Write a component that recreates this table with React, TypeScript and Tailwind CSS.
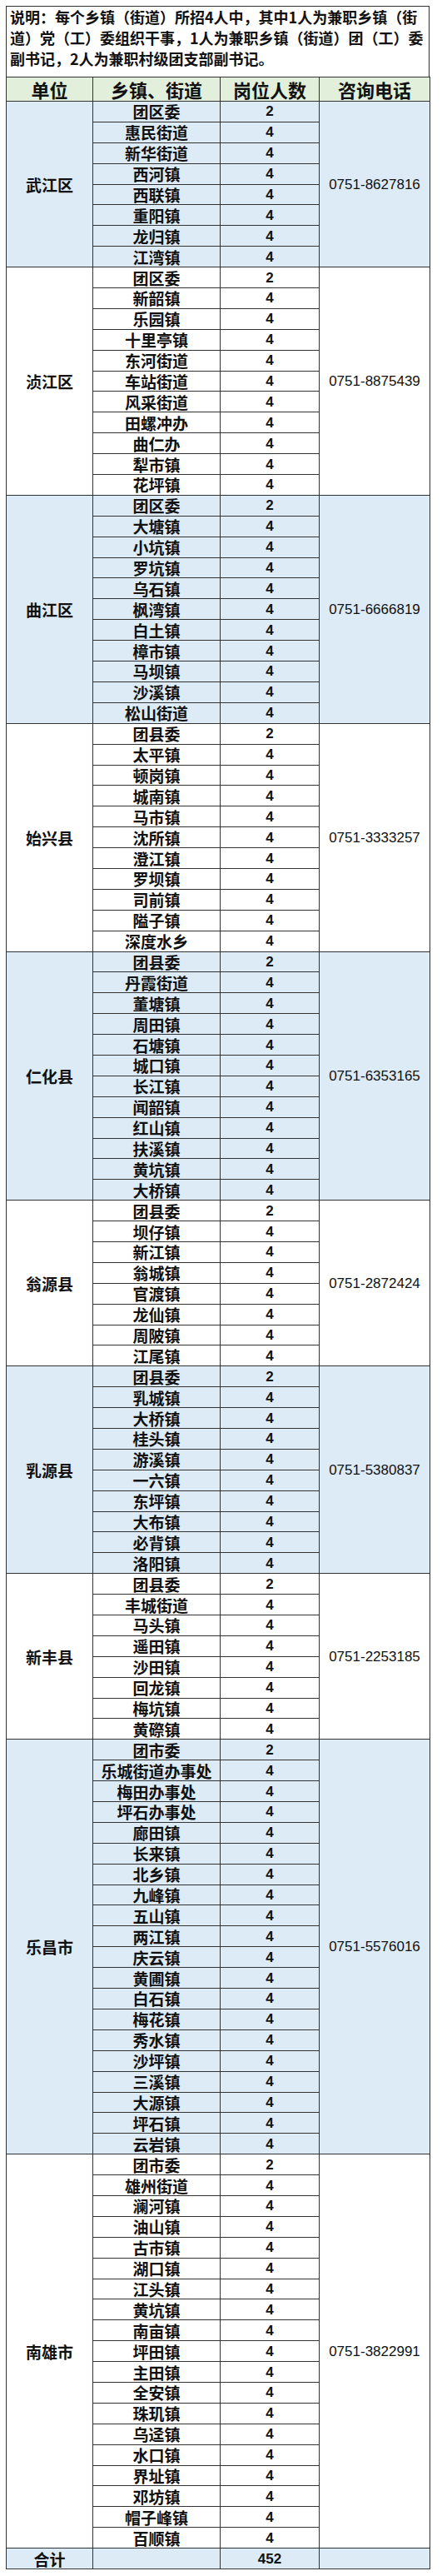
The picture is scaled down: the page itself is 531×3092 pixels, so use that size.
const BLUE = "bg-[#ddebf7]";
const WHITE = "bg-white";

interface Group {
  unit: string;
  phone: string;
  towns: string[];
}

const groups: Group[] = [
  {
    unit: "武江区",
    phone: "0751-8627816",
    towns: ["团区委", "惠民街道", "新华街道", "西河镇", "西联镇", "重阳镇", "龙归镇", "江湾镇"],
  },
  {
    unit: "浈江区",
    phone: "0751-8875439",
    towns: ["团区委", "新韶镇", "乐园镇", "十里亭镇", "东河街道", "车站街道", "风采街道", "田螺冲办", "曲仁办", "犁市镇", "花坪镇"],
  },
  {
    unit: "曲江区",
    phone: "0751-6666819",
    towns: ["团区委", "大塘镇", "小坑镇", "罗坑镇", "乌石镇", "枫湾镇", "白土镇", "樟市镇", "马坝镇", "沙溪镇", "松山街道"],
  },
  {
    unit: "始兴县",
    phone: "0751-3333257",
    towns: ["团县委", "太平镇", "顿岗镇", "城南镇", "马市镇", "沈所镇", "澄江镇", "罗坝镇", "司前镇", "隘子镇", "深度水乡"],
  },
  {
    unit: "仁化县",
    phone: "0751-6353165",
    towns: ["团县委", "丹霞街道", "董塘镇", "周田镇", "石塘镇", "城口镇", "长江镇", "闻韶镇", "红山镇", "扶溪镇", "黄坑镇", "大桥镇"],
  },
  {
    unit: "翁源县",
    phone: "0751-2872424",
    towns: ["团县委", "坝仔镇", "新江镇", "翁城镇", "官渡镇", "龙仙镇", "周陂镇", "江尾镇"],
  },
  {
    unit: "乳源县",
    phone: "0751-5380837",
    towns: ["团县委", "乳城镇", "大桥镇", "桂头镇", "游溪镇", "一六镇", "东坪镇", "大布镇", "必背镇", "洛阳镇"],
  },
  {
    unit: "新丰县",
    phone: "0751-2253185",
    towns: ["团县委", "丰城街道", "马头镇", "遥田镇", "沙田镇", "回龙镇", "梅坑镇", "黄磜镇"],
  },
  {
    unit: "乐昌市",
    phone: "0751-5576016",
    towns: [
      "团市委", "乐城街道办事处", "梅田办事处", "坪石办事处", "廊田镇", "长来镇", "北乡镇", "九峰镇", "五山镇", "两江镇",
      "庆云镇", "黄圃镇", "白石镇", "梅花镇", "秀水镇", "沙坪镇", "三溪镇", "大源镇", "坪石镇", "云岩镇",
    ],
  },
  {
    unit: "南雄市",
    phone: "0751-3822991",
    towns: [
      "团市委", "雄州街道", "澜河镇", "油山镇", "古市镇", "湖口镇", "江头镇", "黄坑镇", "南亩镇", "坪田镇",
      "主田镇", "全安镇", "珠玑镇", "乌迳镇", "水口镇", "界址镇", "邓坊镇", "帽子峰镇", "百顺镇",
    ],
  },
];

const cell = "border border-[#333] p-0 text-center align-middle";
const num = "font-['Liberation_Sans','Noto_Sans_CJK_SC',sans-serif] text-[17px]";

export default function App() {
  return (
    <div className="min-h-screen bg-white pl-[7px] pt-[7px] font-['Noto_Sans_CJK_SC',sans-serif] text-[#111]">
      <div className="w-[509px]">
        {/* 说明 */}
        <div className="h-[85px] whitespace-nowrap border border-b-0 border-[#333] pl-[4px] text-[18px] font-bold leading-[25px]">
          说明：每个乡镇（街道）所招4人中，其中1人为兼职乡镇（街
          <br />
          道）党（工）委组织干事，1人为兼职乡镇（街道）团（工）委
          <br />
          副书记，2人为兼职村级团支部副书记。
        </div>

        <table className="w-[509px] table-fixed border-collapse">
          <colgroup>
            <col className="w-[104px]" />
            <col className="w-[153px]" />
            <col className="w-[119px]" />
            <col className="w-[133px]" />
          </colgroup>
          <thead>
            <tr className="h-[29px] bg-[#e2efda] text-[22px] font-bold leading-none">
              <th className={cell}>单位</th>
              <th className={cell}>乡镇、街道</th>
              <th className={cell}>岗位人数</th>
              <th className={cell}>咨询电话</th>
            </tr>
          </thead>
          <tbody className="text-[19px] font-bold leading-none">
            {groups.map((g, gi) => {
              const bg = gi % 2 === 0 ? BLUE : WHITE;
              return g.towns.map((t, i) => (
                <tr key={g.unit + t} className={`h-[24.9px] ${bg}`}>
                  {i === 0 && (
                    <td rowSpan={g.towns.length} className={cell}>
                      {g.unit}
                    </td>
                  )}
                  <td className={`${cell} whitespace-nowrap`}>{t}</td>
                  <td className={`${cell} ${num}`}>{i === 0 ? 2 : 4}</td>
                  {i === 0 && (
                    <td rowSpan={g.towns.length} className={`${cell} ${num} font-normal`}>
                      {g.phone}
                    </td>
                  )}
                </tr>
              ));
            })}
            <tr className={`h-[24.9px] ${BLUE}`}>
              <td className={cell}>合计</td>
              <td className={cell}></td>
              <td className={`${cell} ${num}`}>452</td>
              <td className={cell}></td>
            </tr>
          </tbody>
        </table>
      </div>
    </div>
  );
}
